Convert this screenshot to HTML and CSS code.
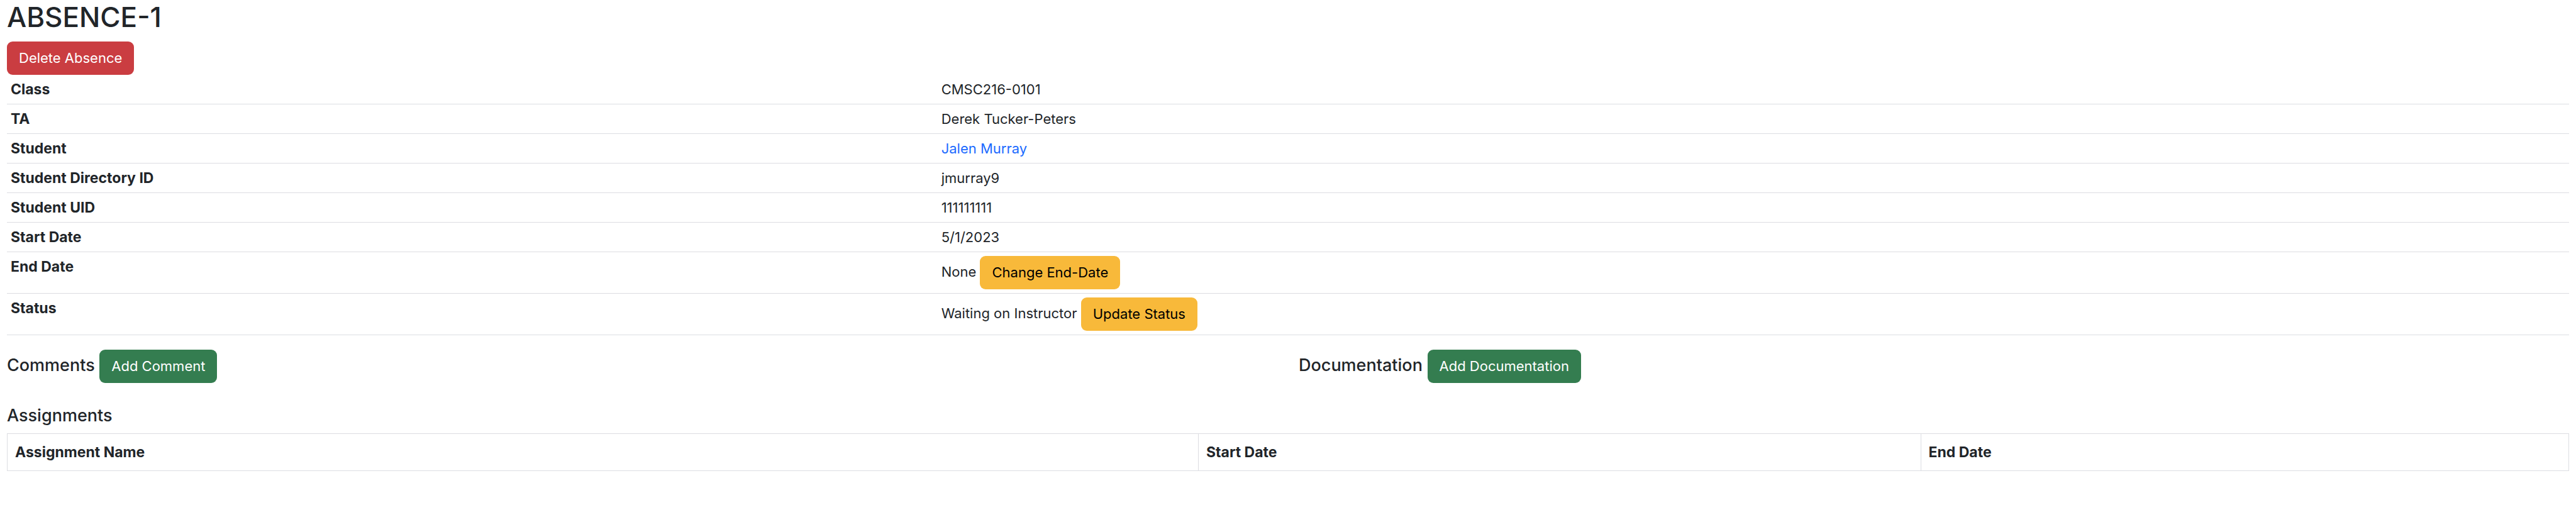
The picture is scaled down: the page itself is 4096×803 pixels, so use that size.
FILE: index.html
```html
<!DOCTYPE html>
<html lang="en">
<head>
<meta charset="utf-8">
<title>ABSENCE-1</title>
<link rel="stylesheet" href="styles.css">
</head>
<body>
<main class="page">
  <h1 class="title">ABSENCE-1</h1>
  <button type="button" class="btn btn-danger">Delete Absence</button>
  <table class="details">
    <tbody>
      <tr><th scope="row">Class</th><td>CMSC216-0101</td></tr>
      <tr><th scope="row">TA</th><td>Derek Tucker-Peters</td></tr>
      <tr><th scope="row">Student</th><td><a class="link" href="#">Jalen Murray</a></td></tr>
      <tr><th scope="row">Student Directory ID</th><td>jmurray9</td></tr>
      <tr><th scope="row">Student UID</th><td>111111111</td></tr>
      <tr><th scope="row">Start Date</th><td>5/1/2023</td></tr>
      <tr><th scope="row">End Date</th><td>None <button type="button" class="btn btn-warning">Change End-Date</button></td></tr>
      <tr><th scope="row">Status</th><td>Waiting on Instructor <button type="button" class="btn btn-warning">Update Status</button></td></tr>
    </tbody>
  </table>
  <div class="columns">
    <section class="group">
      <h2 class="heading heading-inline">Comments</h2>
      <button type="button" class="btn btn-success">Add Comment</button>
    </section>
    <section class="group">
      <h2 class="heading heading-inline">Documentation</h2>
      <button type="button" class="btn btn-success">Add Documentation</button>
    </section>
  </div>
  <h2 class="heading">Assignments</h2>
  <table class="assignments">
    <thead>
      <tr>
        <th scope="col" class="col-name">Assignment Name</th>
        <th scope="col" class="col-start">Start Date</th>
        <th scope="col">End Date</th>
      </tr>
    </thead>
  </table>
</main>
</body>
</html>
```

FILE: styles.css
```css
* {
  box-sizing: border-box;
}

body {
  margin: 0;
  background: #fff;
  color: #212529;
  font-family: Inter, "Liberation Sans", sans-serif;
  font-size: 22px;
  line-height: 34px;
}

.page {
  padding: 0 11px;
}

.title {
  margin: 0 0 11px;
  font-size: 44px;
  font-weight: 500;
  line-height: 55px;
}

.btn {
  display: inline-block;
  padding: 9px 18px;
  border: 1px solid transparent;
  border-radius: 9px;
  font: inherit;
  font-size: 22px;
  font-weight: 400;
  line-height: 33px;
  vertical-align: middle;
  white-space: nowrap;
  cursor: pointer;
}

.btn-danger {
  display: block;
  background: #ca3d41;
  color: #fff;
}

.btn-warning {
  background: #f8b93a;
  color: #000;
}

.btn-success {
  background: #347d50;
  color: #fff;
}

.details,
.assignments {
  width: 100%;
  border-collapse: separate;
  border-spacing: 0;
  table-layout: fixed;
}

.details {
  margin-bottom: 23px;
}

.details th,
.details td {
  padding: 6px;
  border-bottom: 1px solid #dcdde2;
  text-align: left;
  vertical-align: top;
}

.details th {
  width: 36.32%;
  font-size: 23px;
  font-weight: 700;
}

.link {
  color: #1c6bff;
  text-decoration: none;
}

.columns {
  display: grid;
  grid-template-columns: 1fr 1fr;
  gap: 34px;
  margin-bottom: 35px;
}

.group {
  font-size: 27px;
}

.heading {
  margin: 0 0 11px;
  font-size: 27px;
  font-weight: 500;
  line-height: 34px;
}

.heading-inline {
  display: inline;
}

.assignments {
  border: 1px solid #dcdde2;
  border-right: 0;
}

.assignments th {
  padding: 12px;
  border-right: 1px solid #dcdde2;
  text-align: left;
  font-size: 23px;
  font-weight: 700;
}

.assignments .col-name {
  width: 46.5%;
}

.assignments .col-start {
  width: 28.2%;
}
```
